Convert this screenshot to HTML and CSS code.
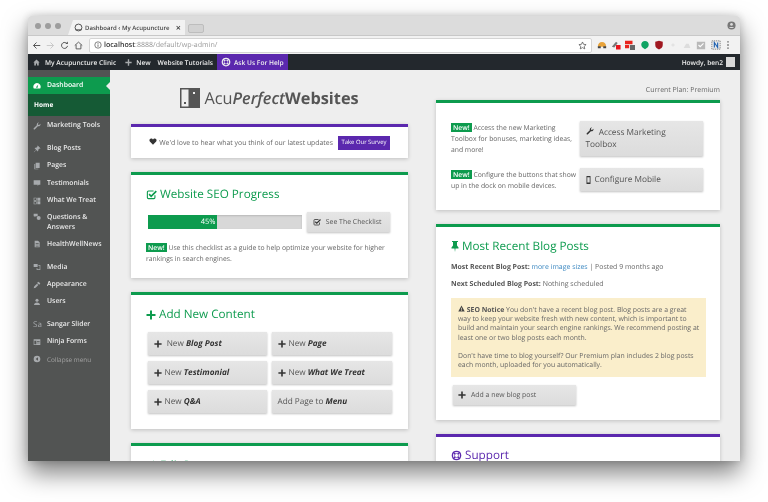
FILE: index.html
```html
<!DOCTYPE html>
<html lang="en">
<head>
    <meta charset="UTF-8">
    <title>Dashboard ‹ My Acupuncture Clinic</title>
    <link rel="stylesheet" href="styles.css">
</head>
<body>
    <svg class="sprites" width="0" height="0">
        <symbol id="i-plus" viewBox="0 0 10 10"><path d="M4 .5h2v3.500h3.500v2H6v3.500H4V6H.5V4H4z"/></symbol>
        <symbol id="i-ring" viewBox="0 0 16 16"><circle cx="8" cy="8" r="6" fill="none" stroke="currentColor" stroke-width="2"/><circle cx="8" cy="8" r="3" fill="none" stroke="currentColor" stroke-width="1"/><path d="M3 3l3 3M13 3l-3 3M3 13l3-3M13 13l-3-3" stroke="currentColor" stroke-width="2"/></symbol>
        <symbol id="i-wrench" viewBox="0 0 16 16"><path d="M15 4.500a4 4 0 0 1-5.300 3.800L4 14.500a1.600 1.600 0 0 1-2.500-2L7.700 6.300A4 4 0 0 1 12 1l-2.300 2.300.5 2 2 .5L14.600 3.500c.3.300.4.600.4 1z"/></symbol>
        <symbol id="i-pin" viewBox="0 0 16 16"><path d="M9.500 1l5.500 5.500-1 1-1-.3-2.500 2.500c.3 1.300 0 2.500-.8 3.300L6.500 9.800 2 14.500 1.500 14l4.700-4.500-3-3.200c.8-.8 2-1.100 3.300-.8l2.500-2.500-.3-1z"/></symbol>
        <symbol id="i-tack" viewBox="0 0 8 11"><path d="M1 0h6v1H6v3.500l1.500 2V7.500h-3L4 11 3.500 7.500h-3v-1L2 4.500V1H1z"/></symbol>
        <symbol id="i-check" viewBox="0 0 16 16"><path d="M13 9v3.500a1.500 1.500 0 0 1-1.500 1.500h-8A1.500 1.500 0 0 1 2 12.500v-8A1.500 1.500 0 0 1 3.500 3H11" fill="none" stroke="currentColor" stroke-width="1.600"/><path d="M4.500 7.500l3 3L15 3" fill="none" stroke="currentColor" stroke-width="2.400"/></symbol>
    </svg>

    <div class="window">
        <div class="tabstrip">
            <div class="lights"><i></i><i></i><i></i></div>
            <div class="tab">
                <svg class="tab-icon" viewBox="0 0 10 10"><circle cx="5" cy="5" r="3.800" fill="none" stroke="#555" stroke-width="1.100"/><path d="M1.500 7.500h7" stroke="#555"/></svg>
                <span class="tab-title">Dashboard ‹ My Acupuncture</span>
                <span class="tab-close">×</span>
            </div>
            <div class="newtab"></div>
            <svg class="account" viewBox="0 0 10 10"><circle cx="5" cy="5" r="4.500" fill="#777"/><circle cx="5" cy="3.800" r="1.500" fill="#ddd"/><path d="M2.300 7.800c.6-1.500 4.800-1.500 5.400 0z" fill="#ddd"/></svg>
        </div>

        <div class="toolbar">
            <svg class="nav" viewBox="0 0 12 12"><path d="M11 6H2M6 2L2 6l4 4" fill="none" stroke="#555" stroke-width="1.300"/></svg>
            <svg class="nav" viewBox="0 0 12 12"><path d="M1 6h9M6 2l4 4-4 4" fill="none" stroke="#c8c8c8" stroke-width="1.300"/></svg>
            <svg class="nav" viewBox="0 0 12 12"><path d="M10 6.500A4 4 0 1 1 8.800 3" fill="none" stroke="#555" stroke-width="1.300"/><path d="M7 4h3.500V.5z" fill="#555"/></svg>
            <svg class="nav" viewBox="0 0 12 12"><path d="M1 6l5-4.500L11 6M2.800 5v5.500h6.400V5" fill="none" stroke="#555" stroke-width="1.200"/></svg>
            <div class="urlbar">
                <svg class="url-info" viewBox="0 0 10 10"><circle cx="5" cy="5" r="4" fill="none" stroke="#555" stroke-width=".9"/><path d="M5 4.300v3M5 2.500v1" stroke="#555"/></svg>
                <span class="url-host">localhost</span><span class="url-path">:8888/default/wp-admin/</span>
                <svg class="url-star" viewBox="0 0 12 12"><path d="M6 1.300l1.400 3.100 3.400.4-2.500 2.300.7 3.400L6 8.800l-3 1.700.7-3.400L1.200 4.800l3.400-.4z" fill="none" stroke="#555"/></svg>
            </div>
            <div class="extensions">
                <svg viewBox="0 0 12 12"><path d="M1 8c0-3 2-5.500 5-5.500S11 5 11 8z" fill="#e8a33a"/><path d="M1 10V7.500h3.500V10zM7.500 10V7.500H11V10z" fill="#444"/></svg>
                <svg viewBox="0 0 12 12"><path d="M1 8l5-6 2 1.500L4 9z" fill="#777"/><path d="M6 6h5.500v5.500H6z" fill="#e8141c"/></svg>
                <svg viewBox="0 0 12 12"><path d="M0 1h9v4H0zM0 6h5v4H0z" fill="#e8241c"/><path d="M6 6h6v6H6z" fill="#666"/></svg>
                <svg viewBox="0 0 12 12"><path d="M6 11L3 9a4.500 4.500 0 1 1 6 0z" fill="#0fa363"/></svg>
                <svg viewBox="0 0 12 12"><path d="M1.500 2L6 1l4.500 1v4c0 3-2.500 4.500-4.500 5.500C4 10.500 1.500 9 1.500 6z" fill="#a01820"/></svg>
                <svg viewBox="0 0 12 12"><path d="M5.500 4h1v4h-1zM4 5.500h4v1H4z" fill="#ddd"/></svg>
                <svg viewBox="0 0 12 12"><path d="M2 9.500l3-5h3l2 5z" fill="#ddd"/></svg>
                <svg viewBox="0 0 12 12"><path d="M1 2h10v9H1z" fill="#b9b9b9"/><path d="M3 6l2 2 4-4" fill="none" stroke="#fff" stroke-width="1.300"/></svg>
                <svg viewBox="0 0 12 12"><path d="M1 1h10v10H1z" fill="#e8e8e8" stroke="#777" stroke-dasharray="1.500 1"/><path d="M4 9V3l4 6V3" fill="none" stroke="#1c5fb0" stroke-width="1.300"/></svg>
                <svg class="kebab" viewBox="0 0 4 12"><path d="M1.200 1.500h1.600v1.600H1.200zM1.200 5.200h1.600v1.600H1.200zM1.200 8.900h1.600v1.600H1.200z" fill="#555"/></svg>
            </div>
        </div>

        <div class="adminbar">
            <div class="adminbar-item site">
                <svg class="ab-icon" viewBox="0 0 10 10"><path d="M5 .8L.5 5h1.300v4.200h2.400V6.500h1.600v2.700h2.400V5H9.500z" fill="#a7aaad"/></svg>
                My Acupuncture Clinic
            </div>
            <div class="adminbar-item ab-new">
                <svg class="ab-icon"><use href="#i-plus"/></svg>
                New
            </div>
            <div class="adminbar-item tutorials">Website Tutorials</div>
            <div class="adminbar-item help">
                <svg class="ab-ring"><use href="#i-ring"/></svg>
                Ask Us For Help
            </div>
            <div class="adminbar-item howdy">
                Howdy, ben2
                <span class="avatar"></span>
            </div>
        </div>

        <div class="admin">
            <nav class="sidebar">
                <a class="menu-item active">
                    <svg class="menu-icon" viewBox="0 0 12 12"><path d="M6 1.500a5.500 5.500 0 0 0-5 7.800c.1.300.4.400.7.400h8.600c.3 0 .6-.1.700-.4A5.500 5.500 0 0 0 6 1.500zM6 9a1.300 1.300 0 0 1-.6-2.400L8 3.700 6.900 7.500A1.300 1.300 0 0 1 6 9z" fill="#fff"/></svg>
                    Dashboard
                </a>
                <a class="submenu-item">Home</a>
                <a class="menu-item sep-small"><svg class="menu-icon"><use href="#i-wrench"/></svg>Marketing Tools</a>
                <a class="menu-item gap"><svg class="menu-icon"><use href="#i-pin"/></svg>Blog Posts</a>
                <a class="menu-item">
                    <svg class="menu-icon" viewBox="0 0 12 12"><path d="M4 1h6v8H4zM2 3h1.200v7H8v1H2z"/></svg>
                    Pages
                </a>
                <a class="menu-item">
                    <svg class="menu-icon" viewBox="0 0 12 12"><path d="M1 2h10v6.500H8.500L7 10.500V8.500H1z"/></svg>
                    Testimonials
                </a>
                <a class="menu-item">
                    <svg class="menu-icon" viewBox="0 0 12 12"><path d="M1 1h4.500v4.500H1zM2 2v2.500h2.500V2zM6.500 1H11v4.500H6.500zM1 6.500h4.500V11H1zM2 7.500V10h2.500V7.500zM6.500 6.500H11V11H6.500z"/></svg>
                    What We Treat
                </a>
                <a class="menu-item two-line">
                    <svg class="menu-icon" viewBox="0 0 12 12"><path d="M1 1h6v4H4L2.500 6.500V5H1z"/><circle cx="8.500" cy="7.500" r="3"/></svg>
                    <span>Questions &amp; Answers</span>
                </a>
                <a class="menu-item">
                    <svg class="menu-icon" viewBox="0 0 12 12"><path d="M2.500 1H7.500L10 3.500V11H2.500zM4 5v1h4.500V5zM4 7v1h4.500V7zM4 9v.8h4.500V9z" fill-rule="evenodd"/></svg>
                    HealthWellNews
                </a>
                <a class="menu-item gap">
                    <svg class="menu-icon" viewBox="0 0 12 12"><path d="M1 1.500h6V6H1zM8 3h3v7.500H5.500V7.500h1V9.500h3.500V4H8z"/></svg>
                    Media
                </a>
                <a class="menu-item">
                    <svg class="menu-icon" viewBox="0 0 12 12"><path d="M1 11l1-3 4-4 2 2-4 4zM6 3l2-2 3 2.500-1.500 2z"/></svg>
                    Appearance
                </a>
                <a class="menu-item">
                    <svg class="menu-icon" viewBox="0 0 12 12"><circle cx="6" cy="3.500" r="2.300"/><path d="M1.500 10.500c0-2.500 2-3.800 4.500-3.800s4.500 1.300 4.500 3.800z"/></svg>
                    Users
                </a>
                <a class="menu-item gap"><span class="menu-letters">Sa</span>Sangar Slider</a>
                <a class="menu-item">
                    <svg class="menu-icon" viewBox="0 0 12 12"><path d="M1 2h10v8.500H1zM2 4v5.500h3V4zM6 5v1h4V5zM6 7v1h4V7z" fill-rule="evenodd"/></svg>
                    Ninja Forms
                </a>
                <a class="menu-item collapse">
                    <svg class="menu-icon" viewBox="0 0 12 12"><path d="M6 1a5 5 0 1 0 0 10A5 5 0 0 0 6 1zM7.500 3.500v5L4 6z" fill-rule="evenodd"/></svg>
                    Collapse menu
                </a>
            </nav>

            <main class="content">
                <div class="column">
                    <div class="logo">
                        <svg class="logo-mark" viewBox="0 0 20 20"><path d="M0 0h20v20H0z" fill="#555"/><path d="M1.500 1.500h7v17h-7z" fill="#eee"/><path d="M4 14h2v2H4z" fill="#555"/><path d="M13 4h2v2h-2z" fill="#eee"/></svg>
                        <span class="logo-text">Acu<em>Perfect</em><strong>Websites</strong></span>
                    </div>
                    <section class="panel purple survey">
                        <span class="survey-text">
                            <svg class="heart" viewBox="0 0 12 11"><path d="M6 10.500L1 5.500C-.5 3.500 1 .8 3.200.8 4.500.8 5.500 1.500 6 2.500 6.500 1.500 7.500.8 8.800.8 11 .8 12.500 3.500 11 5.500z"/></svg>
                            We'd love to hear what you think of our latest updates
                        </span>
                        <a class="survey-btn">Take Our Survey</a>
                    </section>
                    <section class="panel seo">
                        <h2><svg class="h-icon"><use href="#i-check"/></svg>Website SEO Progress</h2>
                        <div class="progress-row">
                            <div class="progress"><div class="progress-fill" style="width: 45%">45%</div></div>
                            <a class="btn checklist"><svg class="btn-icon"><use href="#i-check"/></svg><span>See The Checklist</span></a>
                        </div>
                        <p class="note"><span class="new">New!</span> Use this checklist as a guide to help optimize your website for higher rankings in search engines.</p>
                    </section>
                    <section class="panel add">
                        <h2><svg class="h-icon plus"><use href="#i-plus"/></svg>Add New Content</h2>
                        <div class="btn-grid">
                            <a class="btn"><svg class="btn-icon plus"><use href="#i-plus"/></svg><span>&nbsp;New <b>Blog Post</b></span></a>
                            <a class="btn"><svg class="btn-icon plus"><use href="#i-plus"/></svg><span>New <b>Page</b></span></a>
                            <a class="btn"><svg class="btn-icon plus"><use href="#i-plus"/></svg><span>New <b>Testimonial</b></span></a>
                            <a class="btn"><svg class="btn-icon plus"><use href="#i-plus"/></svg><span>New <b>What We Treat</b></span></a>
                            <a class="btn"><svg class="btn-icon plus"><use href="#i-plus"/></svg><span>New <b>Q&amp;A</b></span></a>
                            <a class="btn"><span>Add Page to <b>Menu</b></span></a>
                        </div>
                    </section>
                    <section class="panel edit">
                        <h2><svg class="h-icon"><use href="#i-wrench"/></svg>Edit Pages</h2>
                    </section>
                </div>

                <div class="column">
                    <p class="plan">Current Plan: Premium</p>
                    <section class="panel tools">
                        <div class="tool-row">
                            <p class="note"><span class="new">New!</span> Access the new Marketing Toolbox for bonuses, marketing ideas, and more!</p>
                            <a class="btn big tall"><span><svg class="btn-icon"><use href="#i-wrench"/></svg>&nbsp;Access Marketing Toolbox</span></a>
                        </div>
                        <div class="tool-row">
                            <p class="note"><span class="new">New!</span> Configure the buttons that show up in the dock on mobile devices.</p>
                            <a class="btn big">
                                <svg class="btn-icon phone" viewBox="0 0 6 10"><path d="M.5 0h5v10h-5zM1.500 1.500v6.500h3V1.500z" fill-rule="evenodd"/></svg>
                                <span>Configure Mobile</span>
                            </a>
                        </div>
                    </section>
                    <section class="panel posts">
                        <h2><svg class="h-icon tack"><use href="#i-tack"/></svg>Most Recent Blog Posts</h2>
                        <p class="post-line"><b>Most Recent Blog Post:</b> <a class="link">more image sizes</a> | Posted 9 months ago</p>
                        <p class="post-line"><b>Next Scheduled Blog Post:</b> Nothing scheduled</p>
                        <div class="notice">
                            <p><b><svg class="warn" viewBox="0 0 12 11"><path d="M6 .5l5.500 10H.5zM5.400 4v3.500h1.200V4zM5.400 8v1.200h1.200V8z" fill-rule="evenodd"/></svg> SEO Notice</b> You don't have a recent blog post. Blog posts are a great way to keep your website fresh with new content, which is important to build and maintain your search engine rankings. We recommend posting at least one or two blog posts each month.</p>
                            <p>Don't have time to blog yourself? Our Premium plan includes 2 blog posts each month, uploaded for you automatically.</p>
                        </div>
                        <a class="btn add-post"><svg class="btn-icon plus"><use href="#i-plus"/></svg><span>Add a new blog post</span></a>
                    </section>
                    <section class="panel purple support">
                        <h2><svg class="h-icon"><use href="#i-ring"/></svg>Support</h2>
                    </section>
                </div>
            </main>
        </div>
    </div>
</body>
</html>
```

FILE: styles.css
```css
* {
    box-sizing: border-box;
    margin: 0;
    padding: 0;
}

html, body {
    height: 502px;
    overflow: hidden;
}

body {
    font-family: "Open Sans", "Liberation Sans", sans-serif;
    text-rendering: geometricPrecision;
    background: #fff;
    color: #555;
    padding: 16px 28px 41px;
}

.sprites {
    display: block;
    height: 0;
}

svg {
    fill: currentColor;
    flex: none;
}

a {
    color: inherit;
}

/* browser window */
.window {
    height: 445px;
    display: flex;
    flex-direction: column;
    overflow: hidden;
    border-radius: 3px 3px 0 0;
    box-shadow: 0 12px 24px rgba(0, 0, 0, 0.5), 0 0 8px rgba(0, 0, 0, 0.18);
    filter: blur(0.3px);
}

.tabstrip {
    height: 19px;
    flex: none;
    display: flex;
    align-items: flex-end;
    background: #dcdcdc;
    padding-left: 7px;
}

.lights {
    display: flex;
    gap: 4px;
    align-self: center;
    width: 33px;
}

.lights i {
    width: 6px;
    height: 6px;
    border-radius: 50%;
    background: #9d9d9d;
}

.tab {
    width: 117px;
    height: 15px;
    display: flex;
    align-items: center;
    padding: 0 4px 0 6px;
    background: #f2f2f2;
    clip-path: polygon(5px 0, 100% 0, 100% 100%, 0 100%);
    font-size: 6px;
    font-weight: 600;
    color: #444;
    white-space: nowrap;
}

.tab-icon {
    width: 9px;
    height: 9px;
    margin-right: 2px;
}

.tab-title {
    flex: 1;
}

.tab-close {
    font-size: 9px;
    line-height: 9px;
    margin-left: 2px;
}

.newtab {
    width: 16px;
    height: 9px;
    margin: 0 0 2px 3px;
    background: #d2d2d2;
    border: 1px solid #bdbdbd;
    border-radius: 2px;
}

.account {
    width: 9px;
    height: 9px;
    margin: 0 4px 5px auto;
}

.toolbar {
    height: 19px;
    flex: none;
    display: flex;
    align-items: center;
    gap: 5px;
    padding: 0 6px 0 4px;
    background: #f2f2f2;
    border-top: 1px solid #c8c8c8;
}

.nav {
    width: 9px;
    height: 9px;
}

.urlbar {
    width: 503px;
    height: 15px;
    display: flex;
    align-items: center;
    margin-left: 1px;
    padding: 0 4px;
    background: #fff;
    border: 1px solid #d4d4d4;
    border-radius: 2px;
    font-size: 7.100px;
}

.url-info {
    width: 8px;
    height: 8px;
    margin-right: 2px;
}

.url-host {
    font-weight: 600;
    color: #333;
}

.url-path {
    color: #9a9a9a;
}

.url-star {
    width: 9px;
    height: 9px;
    margin-left: auto;
}

.extensions {
    display: flex;
    align-items: center;
    gap: 4.200px;
}

.extensions svg {
    width: 10px;
    height: 10px;
}

.extensions .kebab {
    width: 4px;
    margin-left: 1px;
}

/* wp admin bar */
.adminbar {
    height: 16px;
    flex: none;
    display: flex;
    align-items: center;
    background: #23282d;
    color: #eee;
    font-size: 6.600px;
    font-weight: 600;
    white-space: nowrap;
}

.adminbar-item {
    height: 100%;
    display: flex;
    align-items: center;
}

.ab-icon {
    width: 7px;
    height: 7px;
}

.site {
    padding-left: 5px;
    gap: 5px;
}

.ab-new {
    padding-left: 9px;
    gap: 4px;
}

.ab-new .ab-icon {
    fill: #a7aaad;
}

.tutorials {
    padding-left: 7px;
}

.help {
    margin-left: 4px;
    padding: 0 4px;
    gap: 3px;
    background: #5b28ae;
}

.ab-ring {
    width: 10px;
    height: 10px;
}

.howdy {
    margin-left: auto;
    padding-right: 5px;
    gap: 3px;
}

.avatar {
    width: 9px;
    height: 10px;
    background: #d8d8d8;
}

.admin {
    flex: 1;
    min-height: 0;
    display: flex;
}

/* sidebar */
.sidebar {
    width: 82px;
    flex: none;
    padding-top: 7px;
    background: #525453;
    color: #e8e8e8;
    font-size: 6.850px;
    font-weight: 600;
}

.menu-item {
    display: flex;
    align-items: center;
    min-height: 17.300px;
    padding: 1px 2px 1px 5px;
    gap: 6px;
    line-height: 9.300px;
}

.menu-icon {
    width: 8px;
    height: 8px;
    fill: #a7aaad;
}

.menu-item.active {
    position: relative;
    background: #0d9b4e;
    color: #fff;
}

.menu-item.active::after {
    content: "";
    position: absolute;
    right: 0;
    top: 5px;
    border: 4px solid transparent;
    border-right-color: #eee;
    border-left-width: 0;
}

.menu-item.active .menu-icon {
    fill: #fff;
}

.submenu-item {
    display: block;
    height: 22px;
    line-height: 21px;
    padding-left: 6px;
    background: #155a35;
    color: #fff;
    font-weight: 700;
    font-size: 6.500px;
}

.sep-small {
    margin-top: 1px;
}

.gap {
    margin-top: 5.500px;
}

.two-line {
    min-height: 26.500px;
    align-items: flex-start;
    padding-top: 4px;
}

.menu-letters {
    width: 10px;
    margin-right: -2px;
    font-weight: 400;
    color: #a7aaad;
    font-size: 8px;
}

.collapse {
    color: #a3a3a3;
    font-weight: 400;
    font-size: 6.400px;
}

/* dashboard */
.content {
    flex: 1;
    min-width: 0;
    display: grid;
    grid-template-columns: 277px 284px;
    column-gap: 28px;
    padding-left: 21px;
    overflow: hidden;
    background: #eee;
}

.column {
    display: flex;
    flex-direction: column;
    gap: 14px;
    min-width: 0;
}

.logo {
    height: 54px;
    margin-bottom: -14px;
    display: flex;
    align-items: flex-start;
    justify-content: center;
    gap: 4px;
    padding-top: 18px;
}

.logo-mark {
    width: 20px;
    height: 20px;
}

.logo-text {
    font-size: 16.300px;
    line-height: 20px;
    color: #555;
    white-space: nowrap;
}

.logo-text em {
    font-style: italic;
    font-weight: 600;
}

.logo-text strong {
    font-weight: 700;
}

.plan {
    height: 30px;
    margin-bottom: -14px;
    padding-top: 16px;
    text-align: right;
    font-size: 6.950px;
    line-height: 10px;
    color: #666;
}

.panel {
    flex: none;
    background: #fff;
    border-top: 3px solid #0d9b4e;
    box-shadow: 0 1px 4px rgba(0, 0, 0, 0.2);
}

.panel.purple {
    border-top-color: #5b28ae;
}

.panel h2 {
    display: flex;
    align-items: center;
    gap: 3px;
    font-size: 11.700px;
    font-weight: 400;
    line-height: 17px;
    color: #0d9b4e;
}

.purple h2 {
    color: #5b28ae;
}

.h-icon {
    width: 11px;
    height: 11px;
}

.h-icon.plus {
    width: 10px;
    height: 10px;
}

.h-icon.tack {
    width: 8px;
}

.note {
    font-size: 6.800px;
    line-height: 11px;
    color: #666;
}

.new {
    display: inline-block;
    padding: 0 2px;
    background: #0d9b4e;
    color: #fff;
    font-weight: 600;
    line-height: 9px;
}

.btn {
    display: flex;
    align-items: center;
    padding: 0 5.500px;
    background: linear-gradient(#e6e6e6, #dcdcdc);
    box-shadow: 0 1px 2px rgba(0, 0, 0, 0.25);
    font-size: 8.200px;
    color: #555;
    white-space: nowrap;
}

.btn b {
    font-style: italic;
    font-weight: 700;
    color: #333;
}

.btn-icon {
    width: 8px;
    height: 8px;
    margin-right: 3px;
    fill: #333;
    color: #333;
}

.survey {
    height: 34px;
    display: flex;
    align-items: center;
    justify-content: center;
    gap: 5.500px;
    font-size: 6.900px;
    color: #666;
}

.heart {
    width: 8px;
    height: 7px;
    fill: #333;
}

.survey-btn {
    padding: 2.500px 3px;
    background: #5b28ae;
    color: #fff;
    font-size: 5.900px;
    line-height: 9px;
}

.seo {
    height: 106px;
    padding: 11px 15px 0;
}

.progress-row {
    display: flex;
    align-items: center;
    gap: 5px;
    margin: 9px 3px 10px 2px;
}

.progress {
    width: 155px;
    height: 14px;
    background: #d8d8d8;
    box-shadow: inset 0 1px 2px rgba(0, 0, 0, 0.15);
}

.progress-fill {
    height: 100%;
    padding-right: 2px;
    background: #0d9b4e;
    color: #fff;
    font-size: 7.500px;
    line-height: 14px;
    text-align: right;
}

.checklist {
    width: 83px;
    height: 20px;
    font-size: 6.900px;
}

.checklist .btn-icon {
    margin-right: 5px;
}

.add {
    height: 137px;
    padding: 11px 15px 0;
}

.btn-grid {
    display: grid;
    grid-template-columns: 119px 120px;
    grid-auto-rows: 23px;
    gap: 6px 5px;
    margin: 9px 0 0 2px;
}

.edit {
    height: 60px;
    padding: 11px 15px 0;
}

.tools {
    height: 110px;
    padding: 18px 17px 0 15px;
}

.tool-row {
    display: grid;
    grid-template-columns: 129px 123px;
    align-items: center;
    margin-bottom: 12px;
}

.btn.big {
    height: 23px;
    font-size: 8.300px;
}

.btn.big.tall {
    height: 35px;
    padding-top: 1px;
    white-space: normal;
    line-height: 12px;
}

.phone {
    width: 5px;
    height: 8px;
    margin-right: 4px;
}

.posts {
    height: 196px;
    padding: 11px 15px 0;
}

.post-line {
    margin-top: 7px;
    font-size: 6.950px;
    line-height: 10px;
    color: #666;
}

.post-line:first-of-type {
    margin-top: 8px;
}

.post-line b {
    font-weight: 700;
    color: #555;
}

.link {
    color: #3a87c0;
}

.notice {
    width: 255px;
    margin-top: 8px;
    padding: 7px 5.500px 7px 7px;
    background: #faeecb;
    font-size: 6.900px;
    line-height: 9.200px;
    color: #666;
}

.notice p + p {
    margin-top: 9.200px;
}

.notice b {
    font-weight: 700;
    color: #555;
}

.warn {
    width: 7px;
    height: 7px;
    fill: #444;
}

.add-post {
    width: 123px;
    height: 20px;
    margin: 8px 0 0 2px;
    font-size: 6.900px;
    padding-left: 5px;
}

.add-post .btn-icon {
    margin-right: 5px;
}

.support {
    height: 60px;
    padding: 10px 15px 0;
}
```
